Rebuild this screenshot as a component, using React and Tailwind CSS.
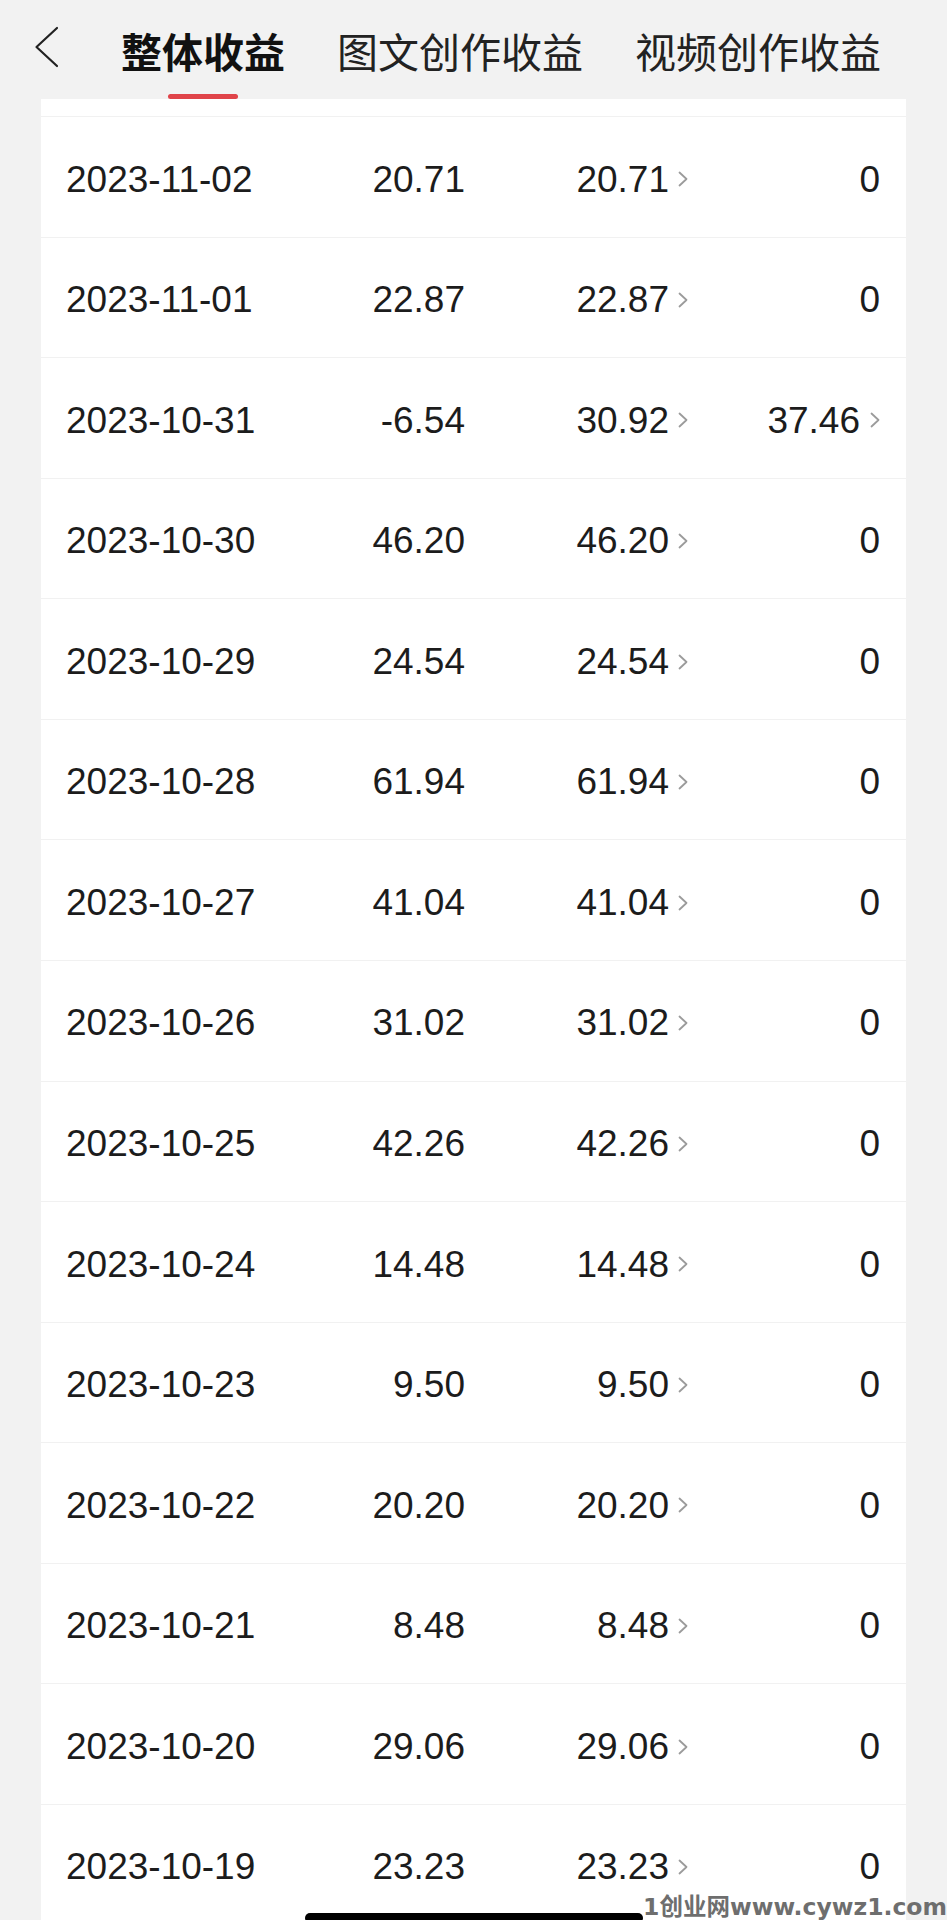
import React from 'react';

const rows = [
  ['2023-11-02', '20.71', '20.71', '0'],
  ['2023-11-01', '22.87', '22.87', '0'],
  ['2023-10-31', '-6.54', '30.92', '37.46'],
  ['2023-10-30', '46.20', '46.20', '0'],
  ['2023-10-29', '24.54', '24.54', '0'],
  ['2023-10-28', '61.94', '61.94', '0'],
  ['2023-10-27', '41.04', '41.04', '0'],
  ['2023-10-26', '31.02', '31.02', '0'],
  ['2023-10-25', '42.26', '42.26', '0'],
  ['2023-10-24', '14.48', '14.48', '0'],
  ['2023-10-23', '9.50', '9.50', '0'],
  ['2023-10-22', '20.20', '20.20', '0'],
  ['2023-10-21', '8.48', '8.48', '0'],
  ['2023-10-20', '29.06', '29.06', '0'],
  ['2023-10-19', '23.23', '23.23', '0'],
];

const Chevron = ({ className = '' }) => (
  <svg width="10" height="16" viewBox="0 0 10 16" fill="none" className={className}>
    <path d="M1.5 1.5 L8.5 8 L1.5 14.5" stroke="#9b9b9b" strokeWidth="1.8" strokeLinecap="round" strokeLinejoin="round" />
  </svg>
);

const BackIcon = () => (
  <svg width="26" height="42" viewBox="0 0 26 42" fill="none">
    <path d="M23 2 L2.5 21 L23 40" stroke="#222" strokeWidth="2.2" strokeLinecap="round" strokeLinejoin="round" />
  </svg>
);

const tabs = [
  { label: '整体收益', active: true },
  { label: '图文创作收益' },
  { label: '视频创作收益' },
];

const Row = ({ date, total, article, video }) => (
  <div className="flex items-center h-[120.57px] border-b border-[#f1f1f1] pl-[25px] pt-[5px] text-[37px] text-[#1c1c1c]">
    <div className="w-[200px]">{date}</div>
    <div className="w-[199px] text-right">{total}</div>
    <div className="w-[223px] flex items-center justify-end">
      <span>{article}</span>
      <Chevron className="ml-[9px]" />
    </div>
    <div className="w-[192px] flex items-center justify-end">
      <span>{video}</span>
      {video !== '0' && <Chevron className="ml-[10px]" />}
    </div>
  </div>
);

export default function App() {
  return (
    <div
      className="relative h-[1920px] w-[947px] overflow-hidden bg-[#f2f2f2]"
      style={{ fontFamily: '"Liberation Sans", "Noto Sans CJK SC", sans-serif' }}
    >
      {/* top tab bar */}
      <header className="flex items-start h-[99px]">
        <button className="ml-[34px] mt-[26px]">
          <BackIcon />
        </button>
        <nav className="flex h-full gap-[52px] ml-[61px]" style={{ fontFamily: '"Noto Sans CJK SC", sans-serif' }}>
          {tabs.map((t) => (
            <div key={t.label} className="flex flex-col items-center h-full">
              <span
                className={`mt-[26px] text-[41px] leading-[48px] whitespace-nowrap ${
                  t.active ? 'font-bold text-[#111]' : 'text-[#222]'
                }`}
              >
                {t.label}
              </span>
              {t.active && <div className="mt-auto h-[5px] w-[70px] rounded-full bg-[#e0444a]" />}
            </div>
          ))}
        </nav>
      </header>

      {/* list card */}
      <div className="ml-[41px] w-[865px] bg-white">
        <div className="h-[18px] border-b border-[#f1f1f1]" />
        {rows.map(([d, a, b, c]) => (
          <Row key={d} date={d} total={a} article={b} video={c} />
        ))}
      </div>

      {/* home indicator */}
      <div className="absolute left-[305px] top-[1913px] h-[10px] w-[338px] rounded-full bg-black" />

      {/* watermark */}
      <div
        className="absolute right-0 top-[1893px] flex items-baseline font-bold text-[23.5px] leading-[28px] text-[#6e6e6e] whitespace-nowrap"
        style={{ fontFamily: '"DejaVu Sans", "Noto Sans CJK SC", sans-serif' }}
      >
        <span>1创业网</span>
        <span>www.cywz1.com</span>
      </div>
    </div>
  );
}
